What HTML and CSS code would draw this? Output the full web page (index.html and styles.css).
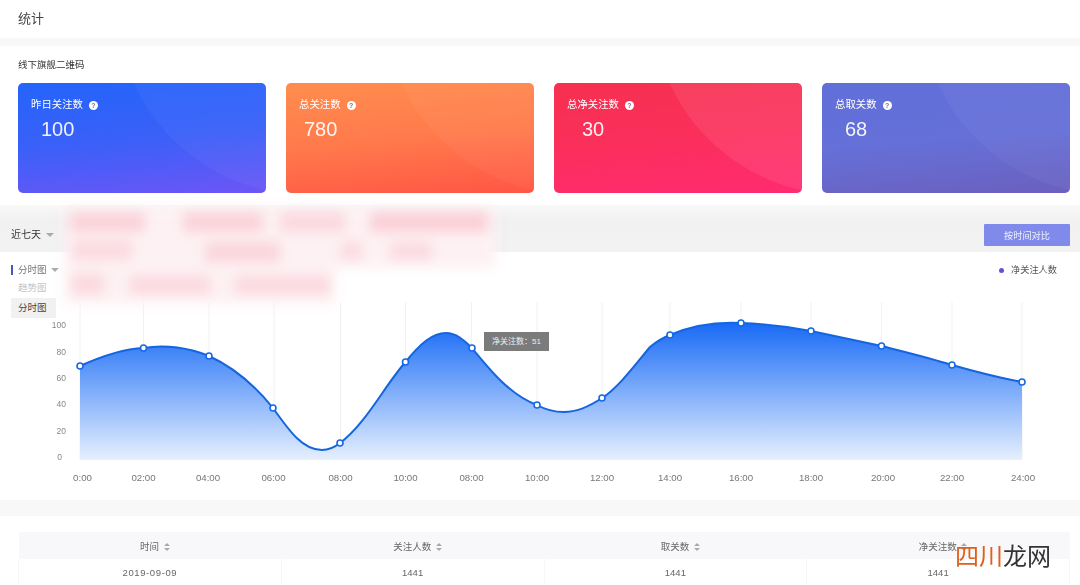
FILE: index.html
```html
<!DOCTYPE html>
<html lang="zh-CN">
<head>
    <meta charset="UTF-8">
    <title>统计</title>
    <link rel="stylesheet" href="styles.css">
</head>
<body>
    <div class="page">
        <header class="page-head">统计</header>
        <div class="band"></div>

        <section class="stats">
            <h2 class="stats-title">线下旗舰二维码</h2>
            <div class="stat-cards">
                <div class="stat-card card-blue">
                    <div class="stat-label">昨日关注数 <span class="help-icon">?</span></div>
                    <div class="stat-value">100</div>
                </div>
                <div class="stat-card card-orange">
                    <div class="stat-label">总关注数 <span class="help-icon">?</span></div>
                    <div class="stat-value">780</div>
                </div>
                <div class="stat-card card-red">
                    <div class="stat-label">总净关注数 <span class="help-icon">?</span></div>
                    <div class="stat-value">30</div>
                </div>
                <div class="stat-card card-purple">
                    <div class="stat-label">总取关数 <span class="help-icon">?</span></div>
                    <div class="stat-value">68</div>
                </div>
            </div>
        </section>

        <div class="filter-bar">
            <div class="range-select">近七天 <span class="caret"></span></div>
            <button class="compare-button">按时间对比</button>
        </div>

        <section class="chart-section">
            <div class="chart-toolbar">
                <div class="chart-type">分时图 <span class="caret"></span></div>
                <div class="legend"><span class="legend-dot"></span>净关注人数</div>
            </div>
            <ul class="chart-menu">
                <li class="menu-item menu-muted">趋势图</li>
                <li class="menu-item menu-active">分时图</li>
            </ul>

            <svg class="chart" viewBox="0 302 1080 198" width="1080" height="198">
                <defs>
                    <linearGradient id="areaFill" gradientUnits="userSpaceOnUse" x1="0" y1="325" x2="0" y2="460">
                        <stop offset="0" stop-color="#1b6cf6"/>
                        <stop offset="1" stop-color="#e6f0fe"/>
                    </linearGradient>
                </defs>

                <g class="grid">
                    <line x1="80" y1="302" x2="80" y2="460"/>
                    <line x1="143.5" y1="302" x2="143.5" y2="460"/>
                    <line x1="209" y1="302" x2="209" y2="460"/>
                    <line x1="274" y1="302" x2="274" y2="460"/>
                    <line x1="340.5" y1="302" x2="340.5" y2="460"/>
                    <line x1="405.5" y1="302" x2="405.5" y2="460"/>
                    <line x1="471.5" y1="302" x2="471.5" y2="460"/>
                    <line x1="537" y1="302" x2="537" y2="460"/>
                    <line x1="602" y1="302" x2="602" y2="460"/>
                    <line x1="670" y1="302" x2="670" y2="460"/>
                    <line x1="741" y1="302" x2="741" y2="460"/>
                    <line x1="811" y1="302" x2="811" y2="460"/>
                    <line x1="881.5" y1="302" x2="881.5" y2="460"/>
                    <line x1="952" y1="302" x2="952" y2="460"/>
                    <line x1="1022" y1="302" x2="1022" y2="460"/>
                </g>

                <path class="area" fill="url(#areaFill)" d="M80 366 C100 357 122 349 143.5 348 C165 344 190 348 209 356 C235 368 257 388 273 408 C290 432 303 450 322 450 C328 450 335 447 340 443 C365 425 385 385 405.5 362 C420 344 432 333 446 333 C456 333 464 340 472 348 C490 370 510 395 537 405 C546 410 554 412 564 412 C578 412 590 406 602 398 C618 388 635 365 650 347 C656 342 662 338 670 335 C695 324 720 322 741 323 C765 324 790 327 811 331 C835 336 858 341 881.5 346 C905 352 930 358 952 365 C980 373 1000 378 1022 382 L1022 460 L80 460 Z"/>
                <path class="line" d="M80 366 C100 357 122 349 143.5 348 C165 344 190 348 209 356 C235 368 257 388 273 408 C290 432 303 450 322 450 C328 450 335 447 340 443 C365 425 385 385 405.5 362 C420 344 432 333 446 333 C456 333 464 340 472 348 C490 370 510 395 537 405 C546 410 554 412 564 412 C578 412 590 406 602 398 C618 388 635 365 650 347 C656 342 662 338 670 335 C695 324 720 322 741 323 C765 324 790 327 811 331 C835 336 858 341 881.5 346 C905 352 930 358 952 365 C980 373 1000 378 1022 382"/>

                <g class="points">
                    <circle cx="80" cy="366" r="3"/>
                    <circle cx="143.5" cy="348" r="3"/>
                    <circle cx="209" cy="356" r="3"/>
                    <circle cx="273" cy="408" r="3"/>
                    <circle cx="340" cy="443" r="3"/>
                    <circle cx="405.5" cy="362" r="3"/>
                    <circle cx="472" cy="348" r="3"/>
                    <circle cx="537" cy="405" r="3"/>
                    <circle cx="602" cy="398" r="3"/>
                    <circle cx="670" cy="335" r="3"/>
                    <circle cx="741" cy="323" r="3"/>
                    <circle cx="811" cy="331" r="3"/>
                    <circle cx="881.5" cy="346" r="3"/>
                    <circle cx="952" cy="365" r="3"/>
                    <circle cx="1022" cy="382" r="3"/>
                </g>

                <g class="y-labels">
                    <text x="66" y="328">100</text>
                    <text x="66" y="354.5">80</text>
                    <text x="66" y="381">60</text>
                    <text x="66" y="407">40</text>
                    <text x="66" y="433.5">20</text>
                    <text x="62" y="460">0</text>
                </g>

                <g class="x-labels">
                    <text x="82.5" y="481">0:00</text>
                    <text x="143.5" y="481">02:00</text>
                    <text x="208" y="481">04:00</text>
                    <text x="273.5" y="481">06:00</text>
                    <text x="340.5" y="481">08:00</text>
                    <text x="405.5" y="481">10:00</text>
                    <text x="471.5" y="481">08:00</text>
                    <text x="537" y="481">10:00</text>
                    <text x="602" y="481">12:00</text>
                    <text x="670" y="481">14:00</text>
                    <text x="741" y="481">16:00</text>
                    <text x="811" y="481">18:00</text>
                    <text x="883" y="481">20:00</text>
                    <text x="952" y="481">22:00</text>
                    <text x="1023" y="481">24:00</text>
                </g>
            </svg>

            <div class="chart-tooltip">净关注数：51</div>
        </section>

        <div class="band band-low"></div>

        <section class="table-section">
            <table class="data-table">
                <thead>
                    <tr>
                        <th>时间 <span class="sort-icon"></span></th>
                        <th>关注人数 <span class="sort-icon"></span></th>
                        <th>取关数 <span class="sort-icon"></span></th>
                        <th>净关注数 <span class="sort-icon"></span></th>
                    </tr>
                </thead>
                <tbody>
                    <tr>
                        <td class="date-cell">2019-09-09</td>
                        <td>1441</td>
                        <td>1441</td>
                        <td>1441</td>
                    </tr>
                </tbody>
            </table>
        </section>

        <div class="redacted"></div>
    </div>

    <div class="watermark"><span class="watermark-accent">四川</span>龙网</div>
</body>
</html>
```

FILE: styles.css
```css
html, body {
    margin: 0;
    padding: 0;
    width: 1080px;
    height: 585px;
    overflow: hidden;
    background-color: #fff;
    color: #444;
    font-family: "Liberation Sans", "Noto Sans CJK SC", sans-serif;
}

.page {
    height: 585px;
    overflow: hidden;
    position: relative;
    filter: blur(0.6px);
}

.page-head {
    height: 38px;
    line-height: 38px;
    padding-left: 18px;
    font-size: 13px;
    color: #444;
}

.band {
    height: 8px;
    background-color: #f8f8f9;
}

.band-low {
    height: 16px;
}

.stats {
    height: 159px;
    box-sizing: border-box;
    padding: 12px 10px 0 18px;
}

.stats-title {
    margin: 0 0 12px 0;
    height: 13px;
    line-height: 13px;
    font-size: 9.5px;
    font-weight: 400;
    color: #333;
}

.stat-cards {
    display: flex;
    gap: 20px;
}

.stat-card {
    position: relative;
    overflow: hidden;
    width: 248px;
    height: 110px;
    box-sizing: border-box;
    padding: 15px 13px;
    border-radius: 5px;
    color: #fff;
}

/* lighter arc in the top right of each card */
.stat-card::after {
    content: "";
    position: absolute;
    left: 98px;
    top: -272px;
    width: 384px;
    height: 384px;
    border-radius: 50%;
    background-color: rgba(255, 255, 255, 0.04);
}

.card-red::after {
    background-color: rgba(255, 255, 255, 0.08);
}

.card-blue { background: linear-gradient(175deg, #2464fb 0%, #3a60f8 50%, #6c56f6 100%); }
.card-orange { background: linear-gradient(175deg, #ff8d4e 0%, #ff7a4c 50%, #ff5644 100%); }
.card-red { background: linear-gradient(175deg, #f6304f 0%, #fb2f5c 50%, #ff2b70 100%); }
.card-purple { background: linear-gradient(175deg, #616fd9 0%, #6570d8 50%, #6b60bf 100%); }

.stat-label {
    display: flex;
    align-items: center;
    gap: 6px;
    height: 14px;
    font-size: 10.4px;
    line-height: 14px;
}

.help-icon {
    display: inline-block;
    width: 9px;
    height: 9px;
    border-radius: 50%;
    background-color: #fff;
    color: #777;
    font-size: 7px;
    font-weight: 700;
    line-height: 9px;
    text-align: center;
}

.stat-value {
    margin-top: 5px;
    font-size: 20px;
    line-height: 24px;
    opacity: 0.92;
}

.card-blue .stat-value { margin-left: 10px; }
.card-orange .stat-value { margin-left: 5px; }
.card-red .stat-value { margin-left: 15px; }
.card-purple .stat-value { margin-left: 10px; }

.filter-bar {
    height: 47px;
    box-sizing: border-box;
    padding: 19px 10px 0 11px;
    display: flex;
    justify-content: space-between;
    background: linear-gradient(180deg, #f9f9f9 0%, #f1f1f2 30%, #f2f2f3 100%);
}

.range-select {
    font-size: 10px;
    line-height: 22px;
    color: #333;
}

.caret {
    display: inline-block;
    margin-left: 2px;
    vertical-align: middle;
    border-left: 4px solid transparent;
    border-right: 4px solid transparent;
    border-top: 4px solid #aaa;
}

.compare-button {
    width: 86px;
    height: 22px;
    padding: 0;
    border: none;
    border-radius: 1px;
    background-color: #7f8aeb;
    color: #f1f2fd;
    font-family: inherit;
    font-size: 9.2px;
}

.chart-section {
    position: relative;
    height: 248px;
}

.chart-toolbar {
    height: 50px;
    box-sizing: border-box;
    padding: 13px 23px 0 11px;
    display: flex;
    justify-content: space-between;
    align-items: flex-start;
}

.chart-type {
    padding-left: 5px;
    height: 10px;
    line-height: 10px;
    margin-top: 0;
    border-left: 2px solid #4a55b5;
    font-size: 9.5px;
    color: #777;
}

.legend {
    display: flex;
    align-items: center;
    gap: 7px;
    font-size: 9.2px;
    line-height: 10px;
    color: #555;
}

.legend-dot {
    width: 5px;
    height: 5px;
    border-radius: 50%;
    background-color: #5b55d6;
}

.chart-menu {
    position: absolute;
    left: 11px;
    top: 26px;
    width: 45px;
    margin: 0;
    padding: 0;
    list-style: none;
}

.menu-item {
    height: 20px;
    line-height: 20px;
    padding-left: 7px;
    font-size: 9.5px;
}

.menu-muted {
    color: #c4c4c4;
    background-color: #fff;
}

.menu-active {
    color: #444;
    background-color: #f1f1f2;
}

.chart {
    display: block;
}

.grid line {
    stroke: #f0f1f5;
    stroke-width: 1;
}

.line {
    fill: none;
    stroke: #1565de;
    stroke-width: 2;
}

.points circle {
    fill: #fff;
    stroke: #1569e8;
    stroke-width: 1.6;
}

.y-labels text {
    font-size: 8.5px;
    fill: #888;
    text-anchor: end;
}

.x-labels text {
    font-size: 9.7px;
    fill: #777;
    text-anchor: middle;
}

.chart-tooltip {
    position: absolute;
    left: 484px;
    top: 80px;
    width: 65px;
    height: 19px;
    line-height: 19px;
    text-align: center;
    background-color: #7b7b7b;
    color: #eee;
    font-size: 8px;
}

.table-section {
    padding: 16px 10px 0 18px;
}

.data-table {
    width: 1052px;
    table-layout: fixed;
    border-collapse: collapse;
    font-size: 9.5px;
    color: #666;
}

.data-table th {
    height: 27px;
    padding: 0 0 0 10px;
    font-weight: 400;
    background-color: #f8f8fa;
}

.data-table td {
    height: 27px;
    padding: 0;
    text-align: center;
    border-left: 1px solid #f7f7f9;
    border-right: 1px solid #f7f7f9;
}

.data-table .date-cell {
    letter-spacing: 0.6px;
}

/* up and down triangles next to a column title */
.sort-icon {
    display: inline-block;
    position: relative;
    width: 6px;
    height: 8px;
    margin-left: 2px;
    vertical-align: middle;
}

.sort-icon::before,
.sort-icon::after {
    content: "";
    position: absolute;
    left: 0;
    border-left: 3px solid transparent;
    border-right: 3px solid transparent;
}

.sort-icon::before {
    top: 0;
    border-bottom: 3px solid #aaa;
}

.sort-icon::after {
    bottom: 0;
    border-top: 3px solid #aaa;
}

/* blurred out block of text in the source picture */
.redacted {
    position: absolute;
    left: 65px;
    top: 208px;
    width: 430px;
    height: 96px;
    filter: blur(6px);
    background-repeat: no-repeat;
    background-image:
        linear-gradient(#fad3da, #fad3da),
        linear-gradient(#fad3da, #fad3da),
        linear-gradient(#fbd9df, #fbd9df),
        linear-gradient(#fad0d8, #fad0d8),
        linear-gradient(#fbdbe1, #fbdbe1),
        linear-gradient(#fad6dc, #fad6dc),
        linear-gradient(#fbdbe1, #fbdbe1),
        linear-gradient(#fbdbe1, #fbdbe1),
        linear-gradient(#fbd9df, #fbd9df),
        linear-gradient(#fbd9df, #fbd9df),
        linear-gradient(#fbd9df, #fbd9df),
        linear-gradient(#fdf1f3, #fdf1f3),
        linear-gradient(#fdf1f3, #fdf1f3);
    background-size:
        75px 20px, 80px 20px, 65px 20px, 118px 20px,
        60px 20px, 75px 20px, 22px 18px, 42px 18px,
        32px 20px, 80px 18px, 95px 18px,
        430px 60px, 270px 96px;
    background-position:
        5px 4px, 118px 4px, 215px 4px, 305px 4px,
        7px 32px, 140px 34px, 275px 34px, 325px 34px,
        7px 66px, 65px 68px, 170px 68px,
        0 0, 0 0;
}

.watermark {
    position: absolute;
    left: 955px;
    top: 540px;
    font-family: "Noto Sans CJK SC", sans-serif;
    font-size: 24px;
    line-height: 30px;
    font-weight: 400;
    color: #333;
}

.watermark-accent {
    color: #e0601a;
}
```
